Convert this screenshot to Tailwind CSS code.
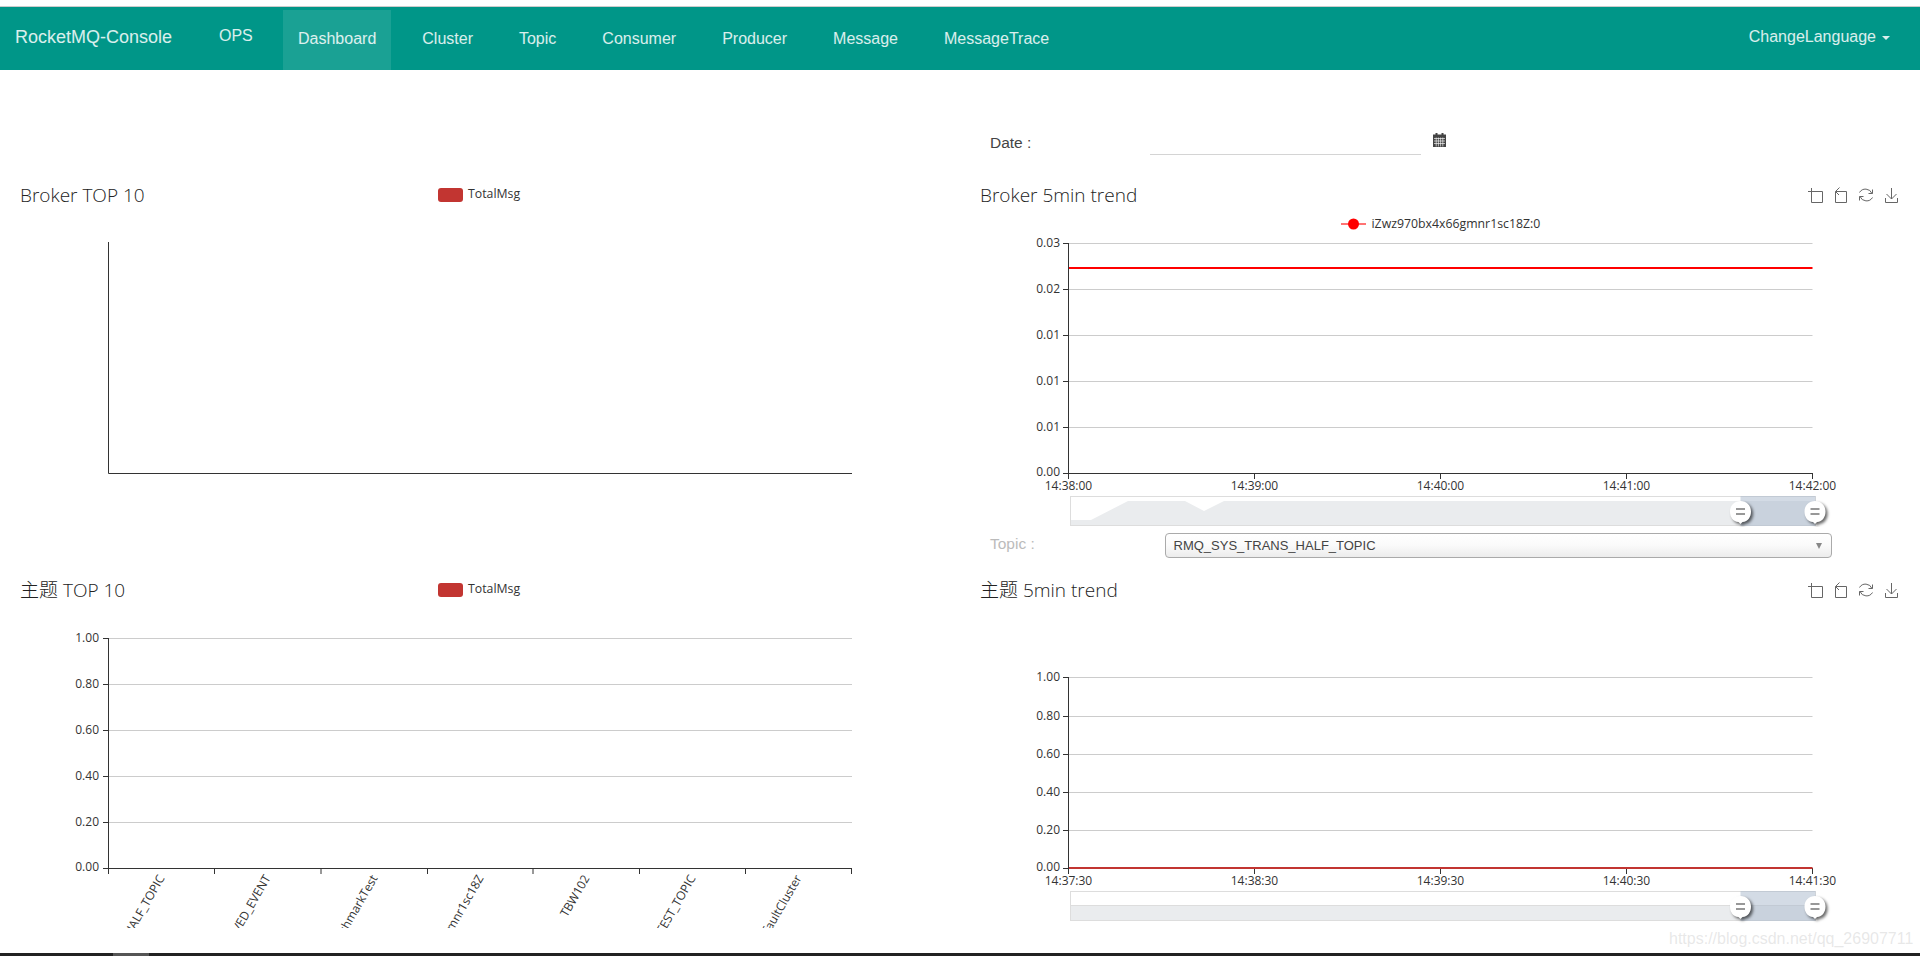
<!DOCTYPE html>
<html lang="en">
<head>
  <meta charset="UTF-8" />
  <title>RocketMQ-Console</title>
  <script src="https://cdn.jsdelivr.net/npm/@tailwindcss/browser@4"></script>
</head>
<body class="h-screen overflow-hidden flex flex-col bg-white text-[#333] font-['Open_Sans','Noto_Sans_CJK_SC',sans-serif]">
  <!-- Navbar -->
  <div class="h-[6px] shrink-0"></div>
  <nav class="h-[64px] shrink-0 border-t border-[#ccc] bg-[#009688] text-white/85 flex items-start font-['Liberation_Sans',sans-serif] text-[16px]">
    <a class="w-[219px] pl-[15px] h-[60px] leading-[60px] text-[18px]">RocketMQ-Console</a>
    <a class="w-[64px] h-[58px] leading-[58px]">OPS</a>
    <ul class="flex gap-[16px] mt-[3px]">
      <li class="h-[60px] leading-[58px] px-[15px] bg-white/10">Dashboard</li>
      <li class="h-[60px] leading-[58px] px-[15px]">Cluster</li>
      <li class="h-[60px] leading-[58px] px-[15px]">Topic</li>
      <li class="h-[60px] leading-[58px] px-[15px]">Consumer</li>
      <li class="h-[60px] leading-[58px] px-[15px]">Producer</li>
      <li class="h-[60px] leading-[58px] px-[15px]">Message</li>
      <li class="h-[60px] leading-[58px] px-[15px]">MessageTrace</li>
    </ul>
    <div class="ml-auto mr-[30px] h-[60px] flex items-center gap-[6px]">
      <span>ChangeLanguage</span>
      <span class="w-0 h-0 mt-[1px] border-x-[4px] border-x-transparent border-t-[4px] border-t-white/85"></span>
    </div>
  </nav>

  <main class="flex-1 min-h-0">
    <!-- Date row -->
    <div class="grid grid-cols-2 h-[102px]">
      <div></div>
      <div class="flex items-start pl-[30px] font-['Liberation_Sans',sans-serif]">
        <label class="w-[160px] mt-[63px] leading-[20px] text-[15.500px] text-[#444]">Date :</label>
        <div class="w-[271px] h-[31px] mt-[54px] border-b border-[#d4d4d4]"></div>
        <svg class="ml-[12px] mt-[63px]" width="13" height="14" viewBox="0 0 13 14">
          <rect x="0" y="1.5" width="13" height="12.5" fill="#444" />
          <rect x="2.5" y="0" width="2" height="3" fill="#444" />
          <rect x="8.5" y="0" width="2" height="3" fill="#444" />
          <path d="M1 5.5h11M1 8h11M1 10.5h11M3.2 4.5v9M5.4 4.5v9M7.6 4.5v9M9.8 4.5v9" stroke="#fff" stroke-width=".8" opacity=".8" fill="none" />
        </svg>
      </div>
    </div>

    <!-- Top row -->
    <div class="grid grid-cols-2 h-[395px]">
      <section>
        <header class="h-[45px] flex items-center pl-[20px]">
          <h2 class="w-[418px] mt-[2px] text-[19px] font-light text-[#222]">Broker TOP 10</h2>
          <span class="w-[25px] h-[14px] rounded-[3px] bg-[#c23531]"></span>
          <span class="ml-[5px] text-[12.300px]">TotalMsg</span>
        </header>
        <svg class="block" width="960" height="350" viewBox="0 217 960 350">
          <path d="M108.500 242V473.500H852" stroke="#333" fill="none" />
        </svg>
      </section>

      <section>
        <header class="h-[45px] flex items-center pl-[20px]">
          <h2 class="mt-[2px] text-[19px] font-light text-[#222]">Broker 5min trend</h2>
          <svg class="ml-auto mr-[20px]" width="94" height="18" viewBox="1806 188 94 18" fill="none" stroke="#666">
            <g id="toolbox">
              <path d="M1808 193.500H1822.500V204.500H1811.500V190" />
              <path d="M1835.500 193.500H1846.500V204.500H1835.500V194M1835.500 193.500L1839.500 189.500M1835.500 193.500L1839 197" />
              <path d="M1859.500 194.500A7 7 0 0 1 1872 195.500M1872.500 199.500A7 7 0 0 1 1860 198.500M1872.500 191.500V195.500H1868.500M1859.500 202.500V198.500H1863.500" />
              <path d="M1891.500 190V201M1886.500 196L1891.500 201L1896.500 196M1885.500 200V204.500H1897.500V200" />
            </g>
          </svg>
        </header>
        <svg class="block" width="960" height="310" viewBox="960 217 960 310" font-size="12" fill="#333">
          <defs>
            <g id="dz-handle" class="drop-shadow-[2px_2px_1.5px_rgba(0,0,0,.6)]">
              <path d="M0 12.500L-2 10.500C-7.500 10 -10.500 5.500 -10.500 0C-10.500 -6 -6 -10.500 0 -10.500C6 -10.500 10.500 -6 10.500 0C10.500 5.500 7.500 10 2 10.500Z" fill="#fff" />
              <path d="M-4.500 -2.500H4.500M-4.500 2.500H4.500" stroke="#777" stroke-width="1.500" />
            </g>
          </defs>
          <!-- legend -->
          <path d="M1341 224H1366" stroke="#f00" stroke-opacity=".55" stroke-width="2" />
          <circle cx="1353.500" cy="224" r="5.500" fill="#f00" />
          <text x="1371.500" y="228" font-size="12.300">iZwz970bx4x66gmnr1sc18Z:0</text>
          <!-- grid -->
          <path d="M1069 243.500H1812.500M1069 289.500H1812.500M1069 335.500H1812.500M1069 381.500H1812.500M1069 427.500H1812.500" stroke="#ccc" />
          <path d="M1063 243.500H1068.500M1063 289.500H1068.500M1063 335.500H1068.500M1063 381.500H1068.500M1063 427.500H1068.500M1063 473.500H1812.500M1068.500 243V479M1254.500 473V479M1440.500 473V479M1626.500 473V479M1812.500 473V479" stroke="#333" />
          <path d="M1069 268H1812.500" stroke="#f00" stroke-width="2" />
          <g text-anchor="end">
            <text x="1060" y="247">0.03</text>
            <text x="1060" y="293">0.02</text>
            <text x="1060" y="339">0.01</text>
            <text x="1060" y="385">0.01</text>
            <text x="1060" y="431">0.01</text>
            <text x="1060" y="476">0.00</text>
          </g>
          <g text-anchor="middle">
            <text x="1068.500" y="490">14:38:00</text>
            <text x="1254.500" y="490">14:39:00</text>
            <text x="1440.500" y="490">14:40:00</text>
            <text x="1626.500" y="490">14:41:00</text>
            <text x="1812.500" y="490">14:42:00</text>
          </g>
          <!-- data zoom -->
          <rect x="1070.500" y="496.500" width="745" height="29" fill="#fff" stroke="#ddd" />
          <path d="M1071 520H1091L1128 501H1185L1204 511L1224 501H1815V525H1071Z" fill="#eaecee" />
          <rect x="1740.500" y="496" width="75" height="30" fill="#a7b7cc" fill-opacity=".5" />
          <use href="#dz-handle" x="1740.500" y="511.500" />
          <use href="#dz-handle" x="1815" y="511.500" />
        </svg>
        <div class="h-[40px] flex items-start pl-[30px] font-['Liberation_Sans',sans-serif]">
          <label class="w-[174.500px] mt-[7px] leading-[20px] text-[15.500px] text-[#bbb]">Topic :</label>
          <div class="w-[667px] h-[25px] mt-[6px] pl-[8px] pr-[9px] flex items-center justify-between rounded-[4px] border border-[#aaa] bg-gradient-to-b from-white via-[#fafafa] to-[#ececec] text-[13px] text-[#444]">
            <span>RMQ_SYS_TRANS_HALF_TOPIC</span>
            <span class="w-0 h-0 border-x-[3.500px] border-x-transparent border-t-[6px] border-t-[#888]"></span>
          </div>
        </div>
      </section>
    </div>

    <!-- Bottom row -->
    <div class="grid grid-cols-2">
      <section>
        <header class="h-[45px] flex items-center pl-[20px]">
          <h2 class="w-[418px] mt-[2px] text-[19px] font-light text-[#222]">主题 TOP 10</h2>
          <span class="w-[25px] h-[14px] rounded-[3px] bg-[#c23531]"></span>
          <span class="ml-[5px] text-[12.300px]">TotalMsg</span>
        </header>
        <svg class="block" width="960" height="341" viewBox="0 612 960 341" font-size="12" fill="#333">
          <defs>
            <clipPath id="label-clip"><rect x="0" y="612" width="960" height="316" /></clipPath>
          </defs>
          <path d="M109 638.500H852M109 684.500H852M109 730.500H852M109 776.500H852M109 822.500H852" stroke="#ccc" />
          <path d="M103 638.500H108.500M103 684.500H108.500M103 730.500H108.500M103 776.500H108.500M103 822.500H108.500M103 868.500H852M108.500 638V874M214.500 868V874M321 868V874M427.500 868V874M533 868V874M639.500 868V874M745.500 868V874M851.500 868V874" stroke="#333" fill="none" />
          <g text-anchor="end">
            <text x="99" y="642">1.00</text>
            <text x="99" y="688">0.80</text>
            <text x="99" y="734">0.60</text>
            <text x="99" y="780">0.40</text>
            <text x="99" y="826">0.20</text>
            <text x="99" y="871">0.00</text>
          </g>
          <g text-anchor="end" clip-path="url(#label-clip)">
            <text transform="translate(165 878) rotate(-60)">RMQ_SYS_TRANS_HALF_TOPIC</text>
            <text transform="translate(271 878) rotate(-60)">OFFSET_MOVED_EVENT</text>
            <text transform="translate(378 878) rotate(-60)">BenchmarkTest</text>
            <text transform="translate(484 878) rotate(-60)">iZwz970bx4x66gmnr1sc18Z</text>
            <text transform="translate(590 878) rotate(-60)">TBW102</text>
            <text transform="translate(696 878) rotate(-60)">SELF_TEST_TOPIC</text>
            <text transform="translate(802 878) rotate(-60)">DefaultCluster</text>
          </g>
        </svg>
      </section>

      <section>
        <header class="h-[45px] flex items-center pl-[20px]">
          <h2 class="mt-[2px] text-[19px] font-light text-[#222]">主题 5min trend</h2>
          <svg class="ml-auto mr-[20px]" width="94" height="18" viewBox="1806 188 94 18" fill="none" stroke="#666">
            <use href="#toolbox" />
          </svg>
        </header>
        <svg class="block" width="960" height="341" viewBox="960 612 960 341" font-size="12" fill="#333">
          <path d="M1069 677.500H1812.500M1069 716.500H1812.500M1069 754.500H1812.500M1069 792.500H1812.500M1069 830.500H1812.500" stroke="#ccc" />
          <path d="M1063 677.500H1068.500M1063 716.500H1068.500M1063 754.500H1068.500M1063 792.500H1068.500M1063 830.500H1068.500M1063 868.500H1812.500M1068.500 677V874M1254.500 868V874M1440.500 868V874M1626.500 868V874M1812.500 868V874" stroke="#333" fill="none" />
          <path d="M1069 868H1812.500" stroke="#c23531" stroke-width="2" />
          <g text-anchor="end">
            <text x="1060" y="681">1.00</text>
            <text x="1060" y="720">0.80</text>
            <text x="1060" y="758">0.60</text>
            <text x="1060" y="796">0.40</text>
            <text x="1060" y="834">0.20</text>
            <text x="1060" y="871">0.00</text>
          </g>
          <g text-anchor="middle">
            <text x="1068.500" y="885">14:37:30</text>
            <text x="1254.500" y="885">14:38:30</text>
            <text x="1440.500" y="885">14:39:30</text>
            <text x="1626.500" y="885">14:40:30</text>
            <text x="1812.500" y="885">14:41:30</text>
          </g>
          <rect x="1070.500" y="891.500" width="745" height="29" fill="#fff" stroke="#ddd" />
          <path d="M1071 905.500H1815V920H1071Z" fill="#eaecee" />
          <path d="M1071 905.500H1815" stroke="#ddd" />
          <rect x="1740.500" y="891" width="75" height="30" fill="#a7b7cc" fill-opacity=".5" />
          <use href="#dz-handle" x="1740.500" y="906.500" />
          <use href="#dz-handle" x="1815" y="906.500" />
          <text x="1669" y="944" font-size="16" fill="#ccc" fill-opacity=".45" font-family="Liberation Sans, sans-serif">https://blog.csdn.net/qq_26907711</text>
        </svg>
      </section>
    </div>
  </main>

  <!-- Window edge -->
  <footer class="h-[3px] shrink-0 bg-[#222] pl-[113px]">
    <div class="w-[36px] h-full bg-[#555]"></div>
  </footer>
</body>
</html>
